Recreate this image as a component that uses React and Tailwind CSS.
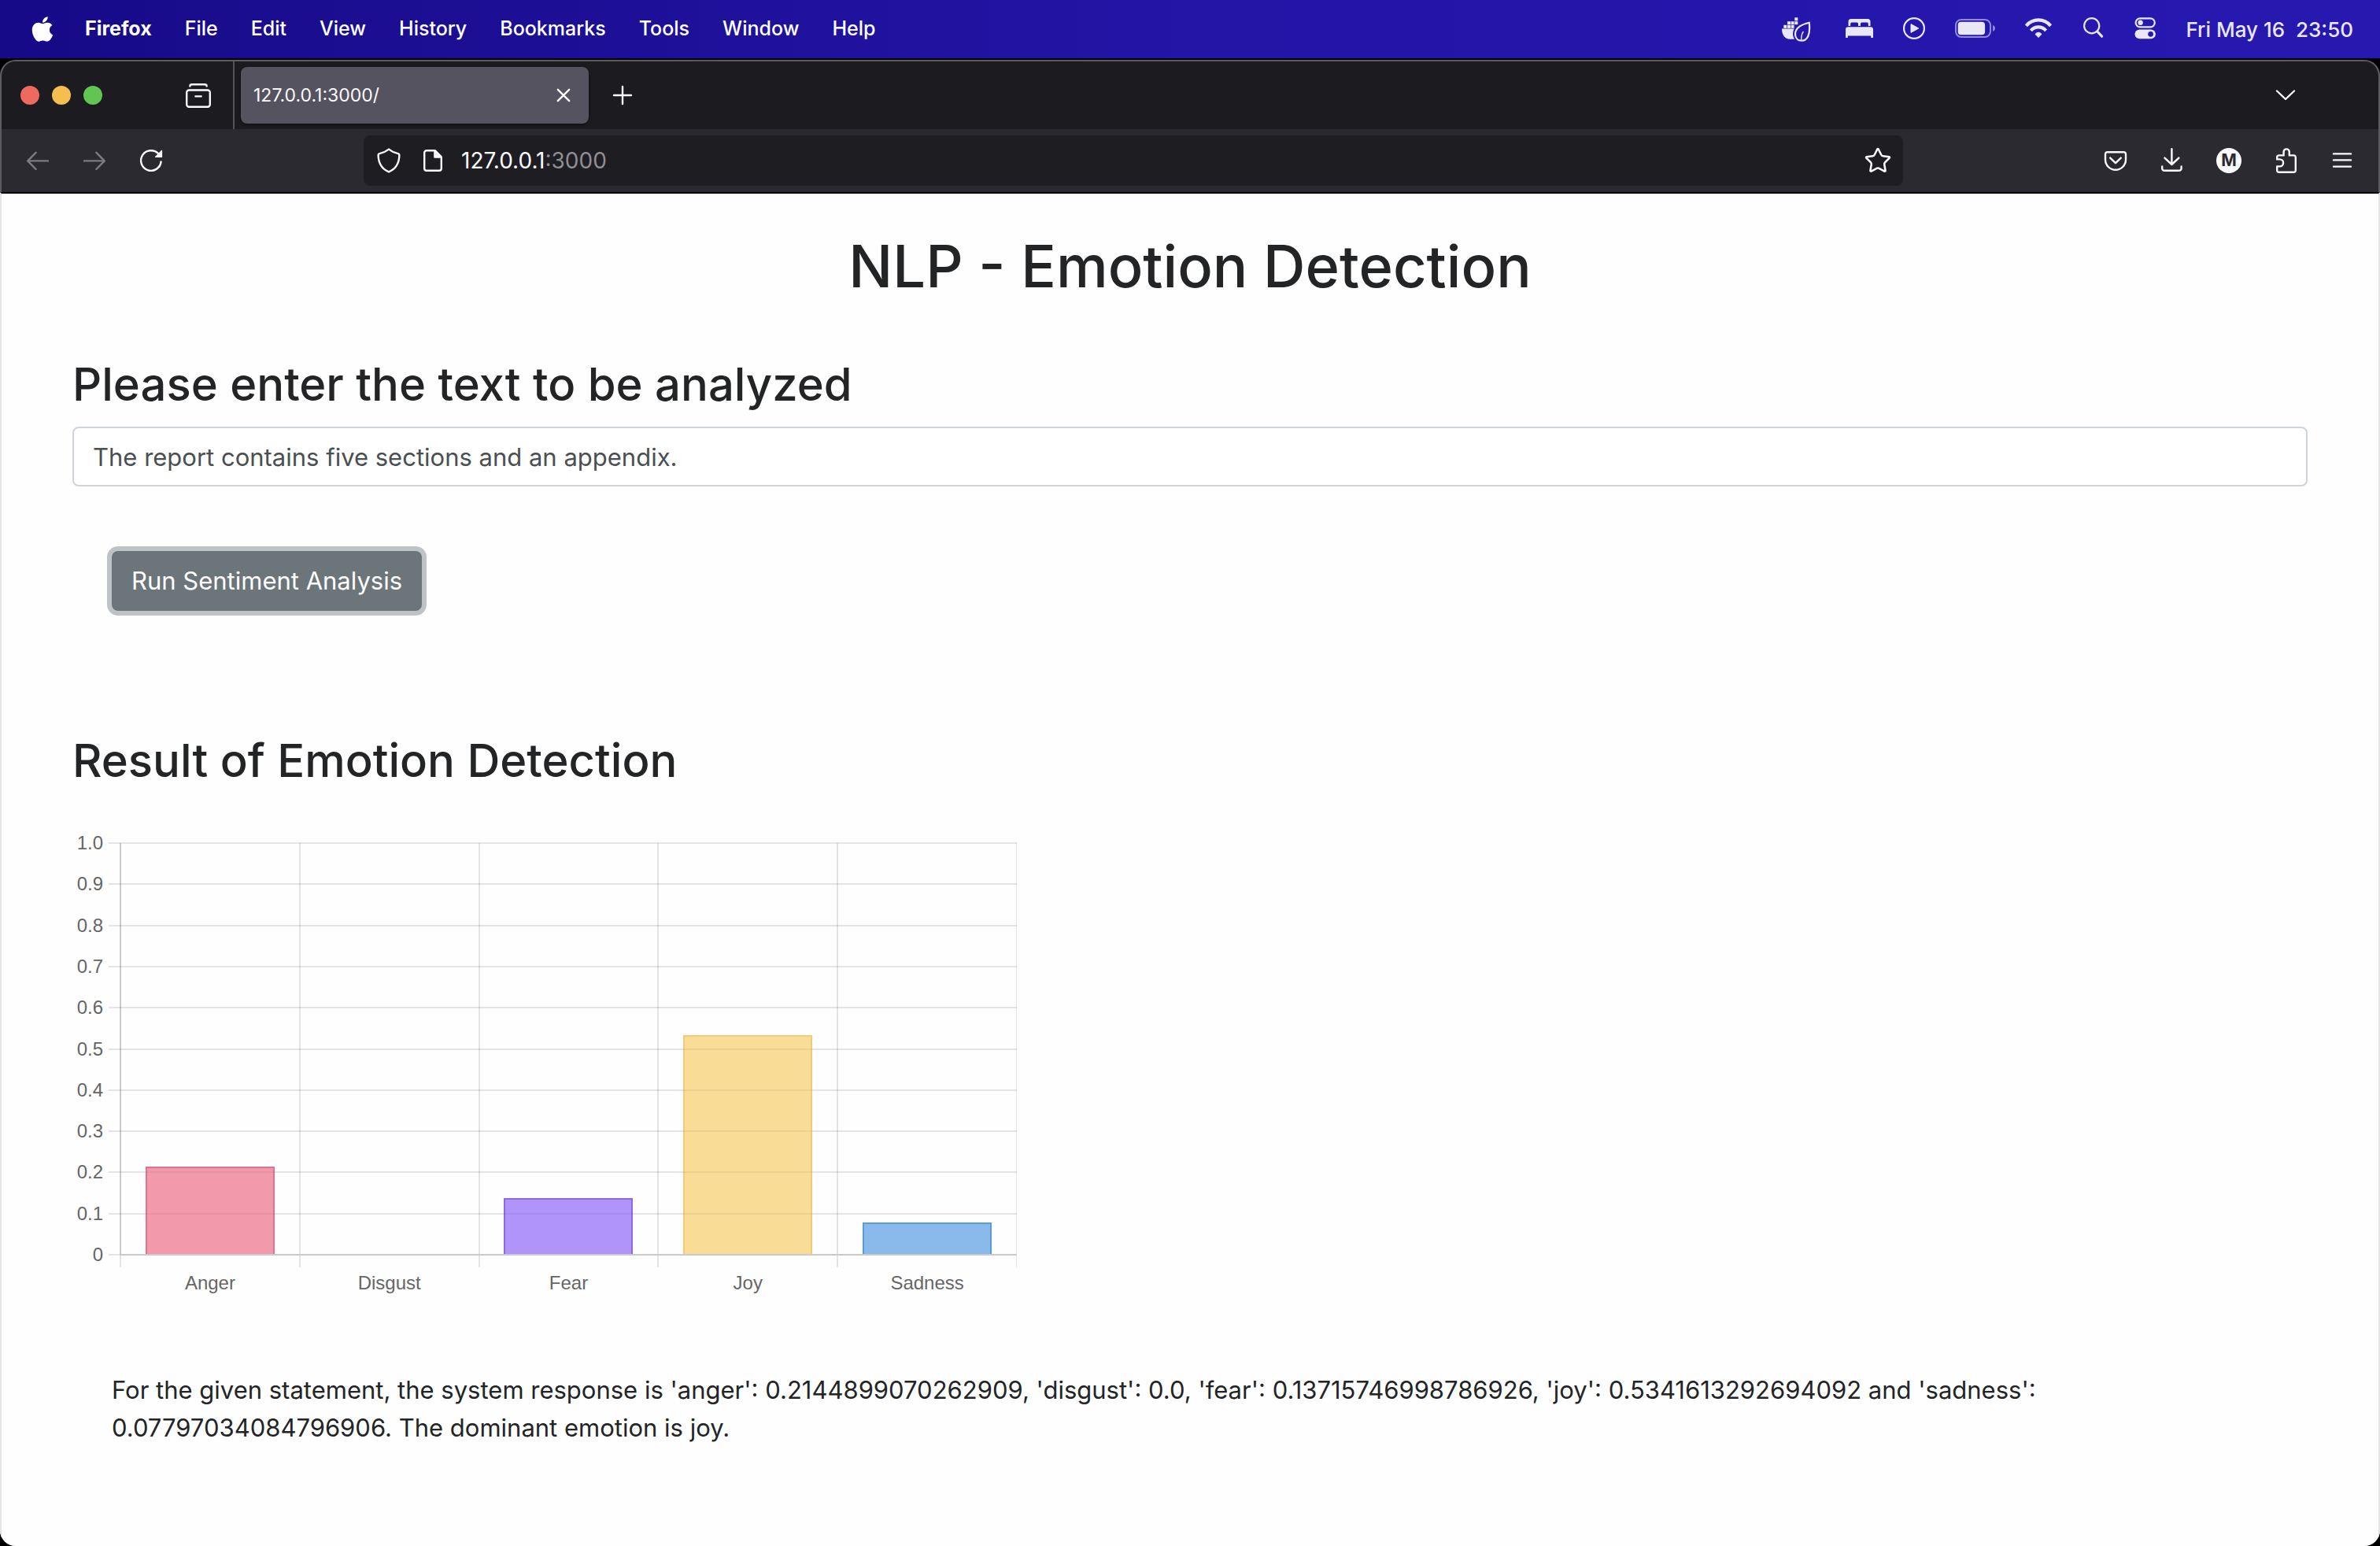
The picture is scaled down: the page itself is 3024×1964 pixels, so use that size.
import React from "react";
import { FaApple } from "react-icons/fa";
import { Star } from "lucide-react";

const menus = ["File", "Edit", "View", "History", "Bookmarks", "Tools", "Window", "Help"];

const emotions = [
  { label: "Anger", value: 0.2144899070262909, fill: "#f29aac", line: "#e0738a" },
  { label: "Disgust", value: 0, fill: "none", line: "none" },
  { label: "Fear", value: 0.13715746998786926, fill: "#b194fa", line: "#8c6bdc" },
  { label: "Joy", value: 0.5341613292694092, fill: "#f9dd96", line: "#f2cd78" },
  { label: "Sadness", value: 0.07797034084796906, fill: "#8abaec", line: "#5b9bd8" },
];

function DockerLeaf() {
  return (
    <svg className="h-10 w-[42px]" viewBox="0 0 42 40" fill="#e9e7f7" aria-hidden="true">
      <rect x="16.3" y="5.3" width="4" height="4" />
      <rect x="7" y="10.2" width="4" height="4" />
      <rect x="11.6" y="10.2" width="4" height="4" />
      <rect x="16.3" y="10.2" width="4" height="4" />
      <rect x="2.3" y="14.8" width="4" height="4" />
      <rect x="7" y="14.8" width="4" height="4" />
      <rect x="11.6" y="14.8" width="4" height="4" />
      <path d="M0 19.6H15.6C13.4 24 13.4 28.6 16 32.8H10.5C3.6 32.8 0 27.4 0 19.6Z" />
      <path
        d="M34.8 11.8C26.8 13.8 17 17 17 26.4C17 31.4 20.4 34.6 25.2 34.6C32.4 34.6 36.4 27.2 34.8 11.8Z"
        fill="none"
        stroke="#e9e7f7"
        strokeWidth="2.2"
      />
      <path d="M27.4 23C25.2 26 24.6 29 24.8 33.6" fill="none" stroke="#e9e7f7" strokeWidth="1.4" />
    </svg>
  );
}

function Bed() {
  return (
    <svg className="h-10 w-9" viewBox="0 0 36 40" fill="#e9e7f7" aria-hidden="true">
      <path d="M4.5 16V10.5A3.5 3.5 0 0 1 8 7H29A3.5 3.5 0 0 1 32.5 10.5V16H29.8V13.2A1.6 1.6 0 0 0 28.2 11.6H21.6A1.6 1.6 0 0 0 20 13.2V16H17V13.2A1.6 1.6 0 0 0 15.4 11.6H8.8A1.6 1.6 0 0 0 7.2 13.2V16Z" />
      <path d="M1 31V20.5A3.2 3.2 0 0 1 4.2 17.3H32.8A3.2 3.2 0 0 1 36 20.5V31H33.2V28.4H3.8V31Z" />
    </svg>
  );
}

function PlayCircle() {
  return (
    <svg className="h-10 w-7" viewBox="0 0 28 40" aria-hidden="true">
      <circle cx="14" cy="19" r="12.9" fill="none" stroke="#e9e7f7" strokeWidth="2.2" />
      <path d="M10 13.6V24.4L19.8 19Z" fill="#e9e7f7" stroke="#e9e7f7" strokeWidth="1" strokeLinejoin="round" />
    </svg>
  );
}

function Battery() {
  return (
    <svg className="h-10 w-[51px]" viewBox="0 0 51 40" aria-hidden="true">
      <rect x="1" y="8" width="44" height="22" rx="7" fill="none" stroke="#9189d8" strokeWidth="2" />
      <rect x="3.7" y="10.7" width="34.4" height="16.6" rx="4" fill="#e9e7f7" />
      <path d="M48 15C50 15.8 51 17.2 51 19S50 22.2 48 23Z" fill="#9189d8" />
    </svg>
  );
}

function Wifi() {
  return (
    <svg className="h-10 w-[34px]" viewBox="0 0 34 40" fill="none" stroke="#e9e7f7" strokeWidth="4.2" aria-hidden="true">
      <path d="M1.4 15.8C9.8 6 24.2 6 32.6 15.8" />
      <path d="M7.4 21.8C12.6 15.8 21.4 15.8 26.6 21.8" />
      <path d="M12.6 26.4C15 23 19 23 21.4 26.4L17 31Z" fill="#e9e7f7" stroke="none" />
    </svg>
  );
}

function Search() {
  return (
    <svg className="h-10 w-7" viewBox="0 0 28 40" fill="none" stroke="#e9e7f7" strokeLinecap="round" aria-hidden="true">
      <circle cx="12.7" cy="15.7" r="9.6" strokeWidth="2.2" />
      <path d="M19.8 23L25.6 29.2" strokeWidth="3.2" />
    </svg>
  );
}

function ControlCenter() {
  return (
    <svg className="h-10 w-7" viewBox="0 0 28 40" aria-hidden="true">
      <rect x="2.6" y="6.3" width="24.2" height="11" rx="5.5" fill="none" stroke="#e9e7f7" strokeWidth="2.2" />
      <circle cx="8.6" cy="11.8" r="3.2" fill="#e9e7f7" />
      <rect x="1.5" y="20.4" width="26.4" height="11.8" rx="5.9" fill="#e9e7f7" />
      <circle cx="21.6" cy="26.3" r="3.4" fill="#2618ac" />
    </svg>
  );
}

function Glyph({ children }) {
  return (
    <svg
      className="size-8 shrink-0"
      viewBox="0 0 32 32"
      fill="none"
      stroke="currentColor"
      strokeWidth="2.4"
      strokeLinecap="round"
      strokeLinejoin="round"
      aria-hidden="true"
    >
      {children}
    </svg>
  );
}

function ToolButton({ label, muted, children }) {
  return (
    <button
      type="button"
      aria-label={label}
      className={`flex h-16 w-[72px] shrink-0 items-center justify-center ${muted ? "text-[#7c7b80]" : "text-[#fbfbfe]"}`}
    >
      {children}
    </button>
  );
}

function MenuBar() {
  return (
    <header className="flex h-[74px] items-center justify-between bg-linear-to-r from-[#170a88] via-[#2315a6] to-[#2718b0] pr-[34px] pl-[36px] font-medium text-white">
      <nav aria-label="Menu bar" className="flex items-center text-[25px]">
        <button type="button" aria-label="Apple menu" className="mr-9">
          <FaApple className="size-9" />
        </button>
        <div className="flex items-center gap-[42px]">
          <button type="button" className="font-bold">
            Firefox
          </button>
          {menus.map((m) => (
            <button type="button" key={m}>
              {m}
            </button>
          ))}
        </div>
      </nav>
      <div className="flex items-center gap-[38px] text-[26px] text-[#e9e7f7]">
        <DockerLeaf />
        <Bed />
        <PlayCircle />
        <Battery />
        <Wifi />
        <Search />
        <ControlCenter />
        <time className="whitespace-pre">Fri May 16  23:50</time>
      </div>
    </header>
  );
}

function TabStrip() {
  return (
    <div className="flex h-[86px] items-center bg-[#1c1b20]">
      <div className="flex gap-4 pl-6">
        <span className="size-6 rounded-full bg-[#ec6a5e]" />
        <span className="size-6 rounded-full bg-[#f4bf4f]" />
        <span className="size-6 rounded-full bg-[#61c554]" />
      </div>
      <div className="flex items-center self-stretch border-r-2 border-[#545459] pr-2 pl-[86px]">
        <ToolButton label="View recent browsing">
          <Glyph>
            <path d="M5.4 4.4C5.4 3 6.4 2.3 8 2.3H24C25.6 2.3 26.6 3 26.6 4.4" />
            <rect x="1.2" y="9.5" width="29.6" height="21.2" rx="3" />
            <path d="M12.6 17.4H19.4" strokeLinecap="square" />
          </Glyph>
        </ToolButton>
      </div>
      <div className="ml-2 flex h-[72px] w-[442px] items-center justify-between rounded-lg bg-[#55535f] px-4 text-[#fbfbfe] shadow-[0_1px_4px_rgba(0,0,0,0.6)]">
        <span className="text-[23px]">127.0.0.1:3000/</span>
        <button type="button" aria-label="Close tab">
          <Glyph>
            <path d="M8.8 8.8L23.2 23.2M23.2 8.8L8.8 23.2" />
          </Glyph>
        </button>
      </div>
      <div className="flex flex-1 items-center justify-between pr-[82px] pl-[7px]">
        <ToolButton label="New tab">
          <Glyph>
            <path d="M16 5V27M5 16H27" />
          </Glyph>
        </ToolButton>
        <ToolButton label="List all tabs">
          <Glyph>
            <path d="M5 10.5L16 21L27 10.5" />
          </Glyph>
        </ToolButton>
      </div>
    </div>
  );
}

function Toolbar() {
  return (
    <div className="flex h-20 items-center bg-[#2b2a31] px-[10px]">
      <ToolButton label="Back" muted>
        <Glyph>
          <path d="M29 16.4H3.2M13.6 5.8L3.2 16.4L13.6 27" />
        </Glyph>
      </ToolButton>
      <ToolButton label="Forward" muted>
        <Glyph>
          <path d="M3 16.4H28.8M18.4 5.8L28.8 16.4L18.4 27" />
        </Glyph>
      </ToolButton>
      <ToolButton label="Reload">
        <Glyph>
          <path d="M28.6 17.5A12.8 12.8 0 1 1 25 7" />
          <path d="M29.4 3.6V11.4H21.6Z" fill="currentColor" strokeWidth="1.4" />
        </Glyph>
      </ToolButton>
      <div className="flex-[39]" />
      <div className="flex h-16 flex-[321] items-center rounded-lg bg-[#1e1d22] pr-[14px] pl-4 text-[#fbfbfe]">
        <Glyph>
          <path d="M16 1.6C19.6 4.4 24 6.4 27.8 7.2C28.8 7.5 29.4 8 29.4 9C29.2 18.4 25.4 26.4 16 30.4C6.6 26.4 2.8 18.4 2.6 9C2.6 8 3.2 7.5 4.2 7.2C8 6.4 12.4 4.4 16 1.6Z" />
        </Glyph>
        <span className="w-6" />
        <Glyph>
          <path d="M8 3.2H18.6L26.8 11.4V26A2.8 2.8 0 0 1 24 28.8H8A2.8 2.8 0 0 1 5.2 26V6A2.8 2.8 0 0 1 8 3.2Z" />
          <path d="M18.4 3.4V11.6H26.6Z" fill="currentColor" />
        </Glyph>
        <div role="textbox" aria-label="Address" tabIndex={0} className="flex-1 pl-5 text-[28px]">
          127.0.0.1<span className="text-[#8f8e94]">:3000</span>
        </div>
        <button type="button" aria-label="Bookmark this page">
          <Star className="size-9" strokeWidth={1.7} />
        </button>
      </div>
      <div className="flex-[39]" />
      <ToolButton label="Save to Pocket">
        <Glyph>
          <path d="M5.6 5.2H26.4A2.6 2.6 0 0 1 29 7.8V14.8A13 13 0 0 1 3 14.8V7.8A2.6 2.6 0 0 1 5.6 5.2Z" />
          <path d="M9.2 12.6L16 19.2L22.8 12.6" />
        </Glyph>
      </ToolButton>
      <ToolButton label="Downloads">
        <Glyph>
          <path d="M15.4 1.2V21M6.4 12.6L15.4 21L24.4 12.6M3.2 23.4V26A2.8 2.8 0 0 0 6 28.8H24.8A2.8 2.8 0 0 0 27.6 26V23.4" />
        </Glyph>
      </ToolButton>
      <ToolButton label="Account">
        <span className="flex size-8 items-center justify-center rounded-full bg-[#fbfbfe] text-[21px] font-bold text-[#2b2a31]">
          M
        </span>
      </ToolButton>
      <ToolButton label="Extensions">
        <Glyph>
          <path d="M5.2 14.4V11.8A2.4 2.4 0 0 1 7.6 9.4H13.6V5A3.6 3.6 0 0 1 20.8 5V9.4H26.4A2.4 2.4 0 0 1 28.8 11.8V28.4A2.4 2.4 0 0 1 26.4 30.8H7.6A2.4 2.4 0 0 1 5.2 28.4V23.4H8.6A4.5 4.5 0 0 0 8.6 14.4Z" />
        </Glyph>
      </ToolButton>
      <ToolButton label="Open application menu">
        <Glyph>
          <path d="M5 7.4H27M5 15.4H27M5 23.6H27" />
        </Glyph>
      </ToolButton>
    </div>
  );
}

function EmotionChart() {
  const left = 61;
  const right = 1200;
  const top = 15;
  const bottom = 538;
  const step = (right - left) / emotions.length;
  const ticks = Array.from({ length: 11 }, (_, i) => i);
  const yOf = (v) => bottom - v * (bottom - top);
  return (
    <svg
      className="block h-[600px] w-[1201px]"
      viewBox="0 0 1201 600"
      role="img"
      aria-label="Bar chart of emotion scores"
      fontFamily="'Liberation Sans', Arial, sans-serif"
      fontSize="24"
      fill="#666666"
    >
      {ticks.map((i) => {
        const y = Math.round(yOf(i / 10));
        return (
          <g key={i}>
            <rect x={left - 15} y={y - 1} width={right - left + 15} height="2" fill="#000000" fillOpacity="0.1" />
            <text x="39" y={y + 8} textAnchor="end">
              {i === 0 ? "0" : (i / 10).toFixed(1)}
            </text>
          </g>
        );
      })}
      {[0, 1, 2, 3, 4, 5].map((i) => (
        <rect
          key={i}
          x={Math.round(left + i * step) - 1}
          y={top}
          width={i === 5 ? 1 : 2}
          height={bottom - top + 16}
          fill="#000000"
          fillOpacity="0.1"
        />
      ))}
      {emotions.map((e, i) => {
        const x = Math.round(left + i * step + step * 0.14);
        const w = 164;
        const y = Math.round(yOf(e.value));
        return (
          <g key={e.label}>
            {e.value > 0 && (
              <>
                <rect x={x} y={y} width={w} height={bottom - y} fill={e.fill} />
                <path
                  d={`M${x + 1} ${bottom}V${y + 1}H${x + w - 1}V${bottom}`}
                  fill="none"
                  stroke={e.line}
                  strokeWidth="2"
                />
                {ticks
                  .filter((t) => t > 0 && t / 10 < e.value)
                  .map((t) => (
                    <rect
                      key={t}
                      x={x}
                      y={Math.round(yOf(t / 10)) - 1}
                      width={w}
                      height="2"
                      fill="#000000"
                      fillOpacity="0.05"
                    />
                  ))}
              </>
            )}
            <text x={left + (i + 0.5) * step} y="582" textAnchor="middle">
              {e.label}
            </text>
          </g>
        );
      })}
      <rect x={left - 1} y={top} width="2" height={bottom - top} fill="#000000" fillOpacity="0.1" />
      <rect x={left} y={bottom - 1} width={right - left} height="2" fill="#cacaca" />
    </svg>
  );
}

export default function App() {
  return (
    <div className="flex min-h-screen flex-col bg-black font-['Inter',sans-serif]">
      <MenuBar />
      <div className="mt-0.5 flex flex-1 flex-col overflow-hidden rounded-[20px] bg-[#5c5b60]">
        <div className="mt-0.5 overflow-hidden rounded-t-[19px] border-x-2 border-[#5c5b60]">
          <TabStrip />
          <Toolbar />
        </div>
        <main className="flex-1 border-x-2 border-t-2 border-x-[#e4e4e6] border-t-black bg-[#fefefe] px-[90px] pt-[44px] text-[31px] leading-[48px] text-[#222426]">
          <h1 className="text-center text-[74px] leading-[96px] font-medium">NLP - Emotion Detection</h1>
          <form className="mt-16" onSubmit={(e) => e.preventDefault()}>
            <h2 className="text-[58px] leading-[76px] font-medium">
              <label htmlFor="statement">Please enter the text to be analyzed</label>
            </h2>
            <input
              id="statement"
              type="text"
              defaultValue="The report contains five sections and an appendix."
              className="mt-4 block h-[76px] w-full rounded-lg border-2 border-[#ced4da] bg-white px-6 text-[#4b4f52]"
            />
            <button
              type="submit"
              className="mt-[82px] ml-[50px] h-[76px] rounded-lg bg-[#6c757a] px-[25px] text-white ring-6 ring-[#bfc3c7]"
            >
              Run Sentiment Analysis
            </button>
          </form>
          <section className="mt-[152px]">
            <h2 className="mb-[52px] text-[58px] leading-[76px] font-medium">Result of Emotion Detection</h2>
            <EmotionChart />
            <p className="mt-[86px] mr-[300px] ml-[50px]">
              For the given statement, the system response is 'anger': 0.2144899070262909, 'disgust': 0.0, 'fear':
              0.13715746998786926, 'joy': 0.5341613292694092 and 'sadness': 0.07797034084796906. The dominant emotion
              is joy.
            </p>
          </section>
        </main>
      </div>
    </div>
  );
}
